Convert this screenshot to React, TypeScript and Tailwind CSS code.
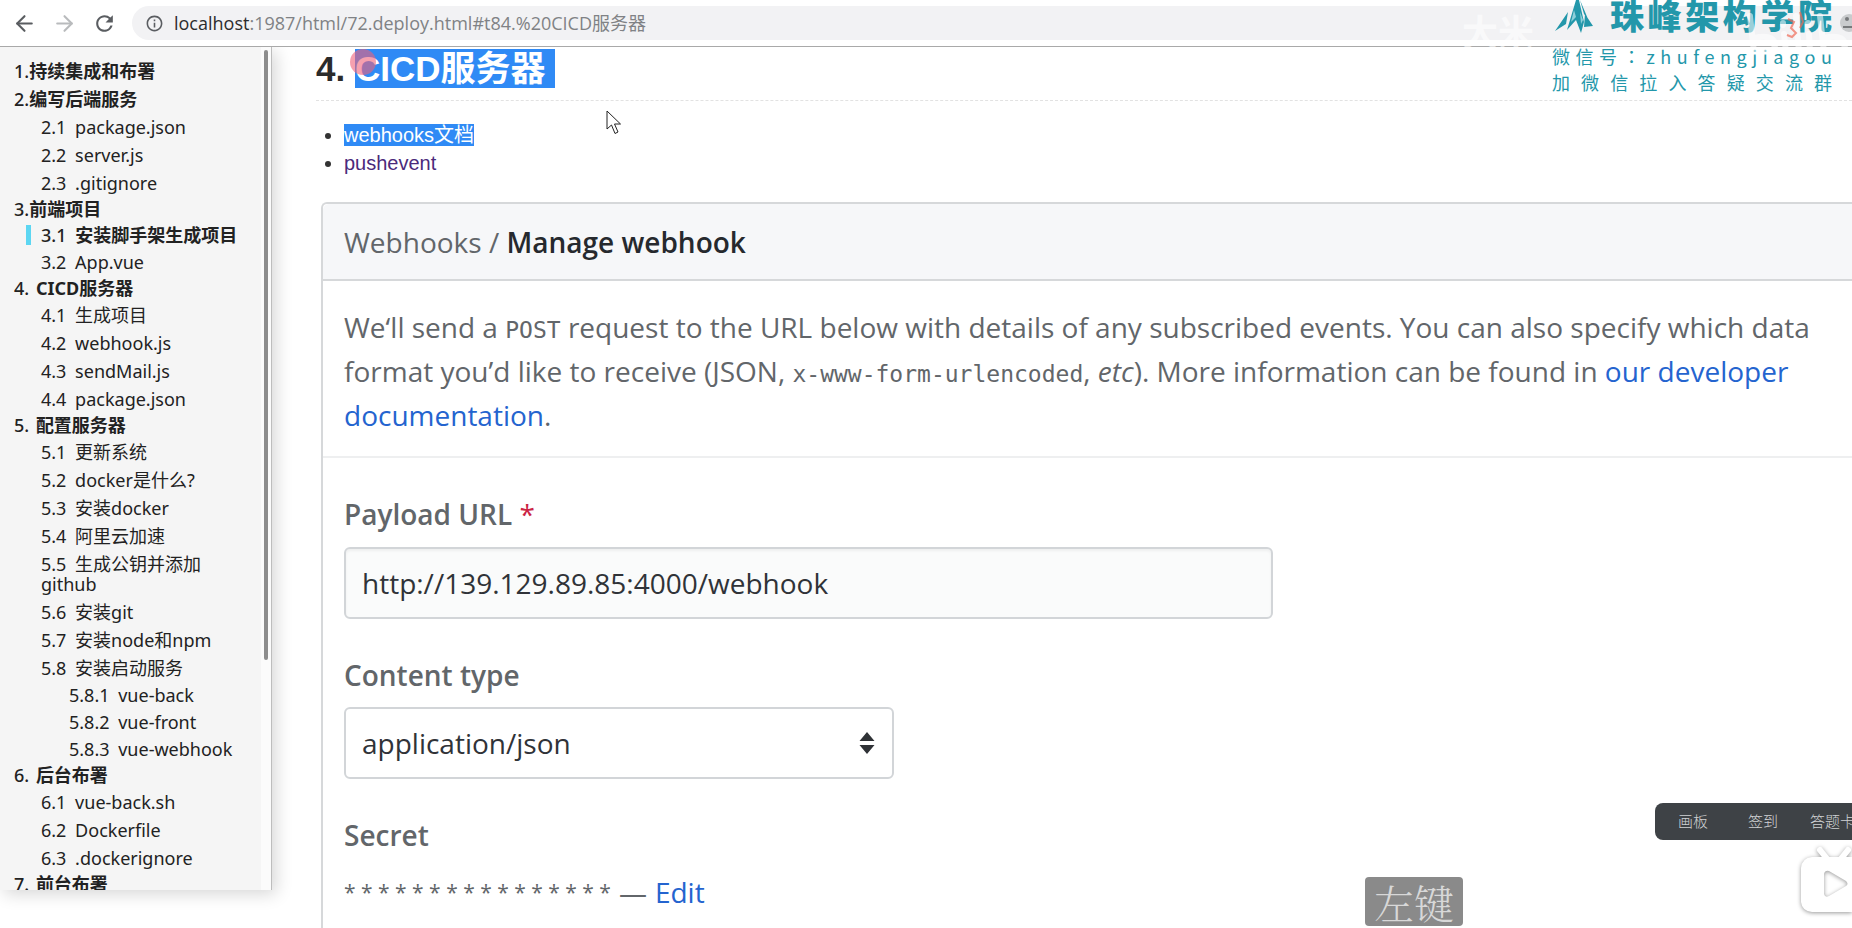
import { ArrowLeft, ArrowRight } from "lucide-react";
import { MdOutlineInfo, MdRefresh } from "react-icons/md";

type Level = 1 | 2 | 3;
type Entry = { no: string; title: string; level: Level; roomy?: boolean; active?: boolean };

const toc: Entry[] = [
  { no: "1.", title: "持续集成和布署", level: 1, roomy: true },
  { no: "2.", title: "编写后端服务", level: 1, roomy: true },
  { no: "2.1 ", title: "package.json", level: 2 },
  { no: "2.2 ", title: "server.js", level: 2 },
  { no: "2.3 ", title: ".gitignore", level: 2 },
  { no: "3.", title: "前端项目", level: 1 },
  { no: "3.1 ", title: "安装脚手架生成项目", level: 2, active: true },
  { no: "3.2 ", title: "App.vue", level: 2 },
  { no: "4. ", title: "CICD服务器", level: 1 },
  { no: "4.1 ", title: "生成项目", level: 2 },
  { no: "4.2 ", title: "webhook.js", level: 2 },
  { no: "4.3 ", title: "sendMail.js", level: 2 },
  { no: "4.4 ", title: "package.json", level: 2 },
  { no: "5. ", title: "配置服务器", level: 1 },
  { no: "5.1 ", title: "更新系统", level: 2 },
  { no: "5.2 ", title: "docker是什么?", level: 2 },
  { no: "5.3 ", title: "安装docker", level: 2 },
  { no: "5.4 ", title: "阿里云加速", level: 2 },
  { no: "5.5 ", title: "生成公钥并添加github", level: 2 },
  { no: "5.6 ", title: "安装git", level: 2 },
  { no: "5.7 ", title: "安装node和npm", level: 2 },
  { no: "5.8 ", title: "安装启动服务", level: 2 },
  { no: "5.8.1 ", title: "vue-back", level: 3 },
  { no: "5.8.2 ", title: "vue-front", level: 3 },
  { no: "5.8.3 ", title: "vue-webhook", level: 3 },
  { no: "6. ", title: "后台布署", level: 1 },
  { no: "6.1 ", title: "vue-back.sh", level: 2 },
  { no: "6.2 ", title: "Dockerfile", level: 2 },
  { no: "6.3 ", title: ".dockerignore", level: 2 },
  { no: "7. ", title: "前台布署", level: 1 },
];

function rowClass(e: Entry) {
  if (e.level === 1) return e.roomy ? "pl-[14px] h-7 leading-7" : "pl-[14px] h-[25px] leading-[25px]";
  if (e.level === 3) return "pl-[69px] h-[27px] leading-[27px]";
  if (e.active) return "pl-[26px] h-[26px] leading-5 py-[3px] flex";
  return "pl-[41px] pr-12 py-1 leading-5";
}

function numberClass(e: Entry) {
  if (e.level === 1) return e.no.endsWith(" ") ? "whitespace-pre pr-[2px] font-medium" : "font-medium";
  return e.active ? "whitespace-pre pr-1 font-medium" : "whitespace-pre pr-1";
}

function BrowserBar() {
  return (
    <header className="flex h-[47px] shrink-0 items-center border-b border-[#a9a9a9] bg-white pl-3 font-['Open_Sans','Noto_Sans_CJK_SC',sans-serif]">
      <button aria-label="Back" className="flex w-10 shrink-0 text-[#5a5d61]">
        <ArrowLeft size={25} strokeWidth={2} />
      </button>
      <button aria-label="Forward" className="flex w-10 shrink-0 text-[#b9bbbd]">
        <ArrowRight size={25} strokeWidth={2} />
      </button>
      <button aria-label="Reload" className="flex w-10 shrink-0 text-[#5a5d61]">
        <MdRefresh size={25} />
      </button>
      <div className="flex h-[34px] min-w-0 flex-1 items-center gap-[10px] rounded-l-full bg-[#f2f2f4] pl-[13px]">
        <MdOutlineInfo size={19} className="shrink-0 text-[#5a5d61]" />
        <p className="truncate text-[18px] leading-6 text-[#808285]">
          <span className="text-[#2b2c2e]">localhost</span>:1987/html/72.deploy.html#t84.%20CICD服务器
        </p>
      </div>
    </header>
  );
}

function Sidebar() {
  return (
    <nav className="relative flex h-[843px] w-[272px] shrink-0 overflow-hidden border-r border-[#bdbdbd] bg-[#f5f5f5] shadow-[4px_4px_16px_rgba(0,0,0,0.16)]">
      <ul className="min-w-0 flex-1 pt-[10px] font-['Noto_Sans','Noto_Sans_CJK_SC',sans-serif] text-[18px] text-[#222]">
        {toc.map((e) => (
          <li key={e.no + e.title} className={rowClass(e)}>
            {e.active && <span className="mr-[10px] h-5 w-[5px] shrink-0 bg-[#5cd6f2]" />}
            <a href={"#t" + e.no.trim()}>
              <span className={numberClass(e)}>{e.no}</span>
              <span className={e.level === 1 || e.active ? "font-bold" : ""}>{e.title}</span>
            </a>
          </li>
        ))}
      </ul>
      <div className="w-[10px] shrink-0 bg-white/60 pt-[3px]">
        <div className="ml-[3px] h-[610px] w-1 rounded-full bg-[#8d8d8d]" />
      </div>
    </nav>
  );
}

function WebhookCard() {
  return (
    <section className="ml-[5px] mt-[25px] flex-1 rounded-tl-md border-l-2 border-t-2 border-[#d6d8da] font-['Open_Sans',sans-serif] text-[28px] text-[#62666a]">
      <h2 className="flex h-[77px] items-center whitespace-pre rounded-tl-md border-b-2 border-[#d6d8da] bg-[#f6f7f9] pl-[21px]">
        <a href="#webhooks">Webhooks</a> / <span className="font-semibold text-[#26292e]">Manage webhook</span>
      </h2>
      <p className="border-b-2 border-[#eeeff0] pb-[19px] pl-[21px] pr-8 pt-6 leading-[44px]">
        We‘ll send a <code className="font-['DejaVu_Sans_Mono',monospace] text-[23px] leading-none">POST</code> request to the URL below with details of any subscribed events. You can also specify which data
        format you’d like to receive (JSON, <code className="font-['DejaVu_Sans_Mono',monospace] text-[23px] leading-none">x-www-form-urlencoded</code>, <em>etc</em>). More information can be found in{" "}
        <a href="#docs" className="text-[#2464cf]">our developer documentation</a>.
      </p>
      <form className="flex flex-col items-start pl-[21px] pt-9">
        <label htmlFor="payload" className="font-semibold leading-[40px]">
          Payload URL <span className="font-normal text-[#cb2444]">*</span>
        </label>
        <input
          id="payload"
          defaultValue="http://139.129.89.85:4000/webhook"
          className="mt-[13px] h-[72px] w-[929px] max-w-full rounded-md border-2 border-[#d2d5d8] bg-[#fafbfb] px-4 text-[#303338] shadow-[inset_0_2px_3px_rgba(0,0,0,0.05)]"
        />
        <label htmlFor="ctype" className="mt-9 font-semibold leading-[40px]">
          Content type
        </label>
        <div className="relative mt-3 w-[550px]">
          <select id="ctype" className="h-[72px] w-full appearance-none rounded-md border-2 border-[#d2d5d8] bg-white px-4 text-[#303338]">
            <option>application/json</option>
          </select>
          <svg viewBox="0 0 16 24" className="pointer-events-none absolute right-[19px] top-6 h-6 w-4 fill-[#2f3236]">
            <path d="M8 1 L15.500 10 H.5Z M8 23 L.5 14 H15.500Z" />
          </svg>
        </div>
        <span className="mt-9 font-semibold leading-[40px]">Secret</span>
        <p className="mt-[17px] flex items-center gap-2 leading-[40px]">
          <span className="text-[21px]">* * * * * * * * * * * * * * * *</span>
          <span>—</span>
          <a href="#edit" className="text-[#2464cf]">Edit</a>
        </p>
      </form>
    </section>
  );
}

function Spread({ text, className }: { text: string; className: string }) {
  return (
    <p className={"flex justify-between " + className}>
      {[...text].map((c, i) => (
        <span key={i}>{c}</span>
      ))}
    </p>
  );
}

function Brand() {
  return (
    <aside className="pointer-events-none absolute right-5 top-0 w-[280px] font-['Noto_Sans_CJK_SC',sans-serif] text-[#2397aa]">
      <div className="flex h-[46px] items-start justify-between">
        <svg viewBox="0 0 40 34" className="ml-[2px] h-[34px] w-10 fill-[#2397aa]">
          <path d="M22 0 L13 30 L22 20 L27 33 L30 22 L25 0Z M14 12 L1 31 L12 24Z M31 14 L30 27 L39 26Z M26 0 L30 14 L34 19Z" />
          <path d="M20 10 L17 22 L22 17Z M26 12 L27 24 L29 20Z" fill="#8fd0da" />
        </svg>
        <Spread text="珠峰架构学院" className="w-[222px] text-[34px] font-black leading-[29px]" />
      </div>
      <Spread text="微信号：zhufengjiagou" className="h-5 font-['Noto_Sans_CJK_TC',sans-serif] text-[18px] leading-5" />
      <Spread text="加微信拉入答疑交流群" className="mt-[6px] h-5 text-[18px] leading-5" />
    </aside>
  );
}

function Watermark() {
  return (
    <>
      <span className="pointer-events-none absolute left-[1462px] top-[14px] font-['Noto_Sans_CJK_SC',sans-serif] text-[36px] font-bold leading-8 text-white/60">大米</span>
      <svg viewBox="0 0 110 50" className="pointer-events-none absolute right-0 top-[10px] h-[50px] w-[110px]">
        <g fill="none" stroke="#fff" strokeOpacity="0.55" strokeWidth="6" strokeLinecap="round">
          <path d="M8 6 L12 42 Q34 44 33 34 Q31 24 12 28 M42 24 L44 42 M41 13 V15 M54 6 L57 42 M67 24 L68 42 M66 13 V15 M78 6 L82 42 Q104 44 103 34 Q101 24 82 28" />
        </g>
        <path d="M46 9 l6 3 -3 6 5 5 -4 4 -5 -2 M58 2 l3 10 -3 6" fill="none" stroke="#ef6a55" strokeOpacity="0.7" strokeWidth="2" />
        <circle cx="107" cy="13" r="9" fill="#c9cbcd" />
        <circle cx="105" cy="9" r="2" fill="#77797b" />
        <path d="M101 17 h9" stroke="#77797b" strokeWidth="2" />
      </svg>
    </>
  );
}

export default function App() {
  return (
    <div className="relative flex h-screen flex-col overflow-hidden bg-white">
      <BrowserBar />
      <div className="flex min-h-0 flex-1 overflow-hidden">
        <Sidebar />
        <main className="flex min-w-0 flex-1 flex-col pl-11 font-['Liberation_Sans','Noto_Sans_CJK_SC',sans-serif]">
          <h1 className="flex h-[54px] shrink-0 items-start whitespace-pre border-b border-dashed border-[#e2e2e2] pt-[2px] text-[35px] font-bold leading-[39px] text-[#2b2b2b]">
            4. <span className="h-[39px] bg-[#2f8af5] pr-[10px] text-white">CICD服务器</span>
          </h1>
          <ul className="mt-5 list-disc pl-7 text-[20px] leading-7 text-[#333]">
            <li>
              <a href="#webhooks-doc" className="bg-[#2f8af5] text-white">webhooks文档</a>
            </li>
            <li>
              <a href="#pushevent" className="text-[#4b2a7b]">pushevent</a>
            </li>
          </ul>
          <WebhookCard />
        </main>
      </div>

      <span className="absolute left-[350px] top-[49px] size-[26px] rounded-full bg-[#f0607a]/60" />
      <svg viewBox="0 0 16 26" className="absolute left-[606px] top-[110px] h-[26px] w-4 fill-white stroke-[#222]">
        <path d="M1 1 V19 L5.500 15 L9 23.500 L12 22 L8.500 14 H14.500Z" />
      </svg>
      <Brand />
      <Watermark />
      <div className="absolute bottom-[2px] left-[1365px] flex h-[49px] w-[98px] items-center justify-center rounded bg-[#8a8a8a] font-['Noto_Serif_CJK_SC','Noto_Sans_CJK_SC',serif] text-[40px] font-light text-[#d8d8d8]">
        左键
      </div>
      <div className="absolute right-0 top-[803px] flex h-[37px] w-[197px] items-center gap-10 overflow-hidden whitespace-nowrap rounded-l-lg bg-[#3e4246] pl-[23px] font-['Noto_Sans_CJK_SC',sans-serif] text-[15px] font-light text-[#d0d2d4]">
        <button>画板</button>
        <button>签到</button>
        <button className="-ml-2">答题卡</button>
      </div>
      <svg viewBox="0 0 56 76" className="absolute right-0 top-[842px] h-[76px] w-14 fill-white drop-shadow-[0_1px_2px_rgba(0,0,0,0.4)]">
        <path d="M24 8 L32 18 M52 8 L44 18" stroke="#fff" strokeWidth="6" strokeLinecap="round" />
        <path fillRule="evenodd" d="M16 15 H70 V70 H16 Q6 69 5 60 V26 Q6 16 16 15Z M28 32 V52 Q29 56 33 54 L50 44 Q53 42 50 39 L33 29 Q29 28 28 32Z" />
      </svg>
    </div>
  );
}
